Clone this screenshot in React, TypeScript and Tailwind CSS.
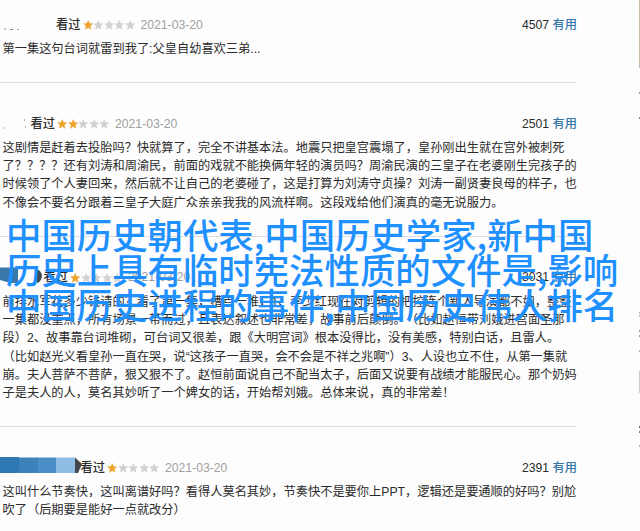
import clsx from "clsx";

const reviews = [
  {
    mask: "dots",
    rating: 1,
    date: "2021-03-20",
    votes: 4507,
    lines: ["第一集这句台词就雷到我了:父皇自幼喜欢三弟..."],
  },
  {
    mask: "faint",
    rating: 2,
    date: "2021-03-20",
    votes: 2501,
    lines: [
      "这剧情是赶着去投胎吗？快就算了，完全不讲基本法。地震只把皇宫震塌了，皇孙刚出生就在宫外被刺死",
      "了？？？？还有刘涛和周渝民，前面的戏就不能换俩年轻的演员吗？周渝民演的三皇子在老婆刚生完孩子的",
      "时候领了个人妻回来，然后就不让自己的老婆碰了，这是打算为刘涛守贞操？刘涛一副贤妻良母的样子，也",
      "不像会不要名分跟着三皇子大庭广众亲亲我我的风流样啊。这段戏给他们演真的毫无说服力。",
    ],
  },
  {
    mask: "dark",
    rating: 1,
    date: "2021-03-20",
    votes: 3031,
    lines: [
      "前排水军花多少钱请的？看了第一集，槽点一堆，1、李少红现在对剪辑的把控连个新人导演都不如，整整",
      "一集都没重点，所有场景一带而过，且表达叙述也非常差，故事前后颠倒。（比如赵恒带刘娥进宫面圣那",
      "段）2、故事靠台词堆砌，可台词又很差，跟《大明宫词》根本没得比，没有美感，特别白话，且雷人。",
      "（比如赵光义看皇孙一直在哭，说“这孩子一直哭，会不会是不祥之兆啊”）3、人设也立不住，从第一集就",
      "崩。夫人菩萨不菩萨，狠又狠不了。赵恒前面说自己不配当太子，后面又说要有战绩才能服民心。那个奶妈",
      "子是夫人的人，莫名其妙听了一个婢女的话，开始帮刘娥。总体来说，真的非常差！",
    ],
  },
  {
    mask: "blue",
    rating: 1,
    date: "2021-03-20",
    votes: 2391,
    lines: [
      "这叫什么节奏快，这叫离谱好吗？看得人莫名其妙，节奏快不是要你上PPT，逻辑还是要通顺的好吗？别尬",
      "吹了（后期要是能好一点就改分）",
    ],
  },
];

const headline = [
  "中国历史朝代表,中国历史学家,新中国",
  "历史上具有临时宪法性质的文件是,影响",
  "中国历史进程的事件,中国历史伟人排名",
];

function Stars({ rating }: { rating: number }) {
  return (
    <span className="flex">
      {[1, 2, 3, 4, 5].map((n) => (
        <svg key={n} viewBox="0 0 21 20" className={clsx("h-[10px] w-[10.4px]", n <= rating ? "fill-[#eda52f]" : "fill-[#d2d2d2]")}>
          <path d="M10.5 0 L13.4 6.4 L20.5 7.2 L15.2 12 L16.8 19.4 L10.5 15.600 L4.2 19.4 L5.8 12 L0.5 7.2 L7.6 6.4 Z" />
        </svg>
      ))}
    </span>
  );
}

// Covered user name in front of each review
function NameMask({ kind }: { kind: string }) {
  if (kind === "dots") {
    return (
      <svg className="h-[18px] w-14 shrink-0" viewBox="0 0 56 18">
        <path d="M4 13h2M10 13.5h3M17.5 13.5h1.5" stroke="#6f8fae" />
      </svg>
    );
  }
  if (kind === "faint") {
    return (
      <svg className="h-[18px] w-[30.5px] shrink-0" viewBox="0 0 30.5 18">
        <path d="M24.5 4v2M25.5 11v2M3 13h2" stroke="#b5b5b5" />
      </svg>
    );
  }
  if (kind === "dark") {
    return (
      <svg className="h-[18px] w-[43.5px] shrink-0 overflow-visible" viewBox="0 0 43.5 18">
        <path d="M0 -1.500H18V14H10L0 11Z" fill="#3a78aa" />
        <path d="M36 0Q42 2 42 7Q41 13 37 14Z" fill="#414853" />
      </svg>
    );
  }
  return (
    <svg className="h-[18px] w-[80.5px] shrink-0 overflow-visible" viewBox="0 0 80.5 18">
      <path d="M0 -2H19V14H0Z" fill="#2e78b3" />
      <path d="M19 -1.500H38V14H19Z" fill="#3c83bc" />
      <path d="M38 -1.500H56V14H38Z" fill="#4a8fc8" />
      <path d="M56 -1.500H75V14H56Z" fill="#8fbde4" />
      <path d="M75 -1.500L82 5L78 14H75Z" fill="#43474d" />
    </svg>
  );
}

export default function App() {
  return (
    <div className="relative flex h-[531px] w-[640px] overflow-hidden bg-[#fdfdfd] font-['Liberation_Sans','Noto_Sans_CJK_SC',sans-serif] text-[12.22px] leading-[18.33px] text-[#2b2b2b] [text-spacing-trim:space-all]">
      <main className="-mt-4 w-[577px] shrink-0">
        {reviews.map((review) => (
          <article key={review.votes} className="border-b border-[#dedede] pt-8 pb-[23.5px]">
            <header className="flex h-[18px] items-center whitespace-nowrap">
              <NameMask kind={review.mask} />
              <span className="mr-[2.5px] font-medium">看过</span>
              <Stars rating={review.rating} />
              <span className="ml-[5.5px] text-[#a0a0a0]">{review.date}</span>
              <span className="ml-auto">
                {review.votes} <a className="font-medium text-[#3377aa]">有用</a>
              </span>
            </header>
            <div className="mt-[6px] pl-[2.5px] whitespace-nowrap">
              {review.lines.map((line) => (
                <p key={line}>{line}</p>
              ))}
            </div>
          </article>
        ))}
      </main>

      {/* Edge of the sidebar, mostly cut off */}
      <aside className="ml-auto flex w-[1.5px] flex-col">
        <div className="h-[68px] bg-[#c9bca6]" />
        <div className="mt-6 h-0.5 bg-[#999999]" />
        <div className="mt-[23px] h-0.5 bg-[#888888]" />
        <div className="mt-[193px] h-0.5 bg-[#bbbbbb]" />
        <div className="mt-px h-0.5 bg-[#bbbbbb]" />
        <div className="mt-[13px] h-0.5 bg-[#999999]" />
        <div className="mt-[3px] h-0.5 bg-[#999999]" />
        <div className="mt-[13px] h-0.5 bg-[#aaaaaa]" />
        <div className="mt-[19px] h-[22px] bg-[#cccccc]" />
        <div className="mt-[33px] h-0.5 bg-[#666666]" />
        <div className="mt-[3px] h-0.5 bg-[#777777]" />
        <div className="mt-3 h-0.5 bg-[#aaaaaa]" />
      </aside>

      <h1 className="absolute top-[216px] left-[6px] font-['Noto_Sans_CJK_SC',sans-serif] text-[35.4px] leading-[35.2px] font-medium whitespace-nowrap text-[#1e90ff]">
        {headline.map((line) => (
          <span key={line} className="block">{line}</span>
        ))}
      </h1>
    </div>
  );
}
